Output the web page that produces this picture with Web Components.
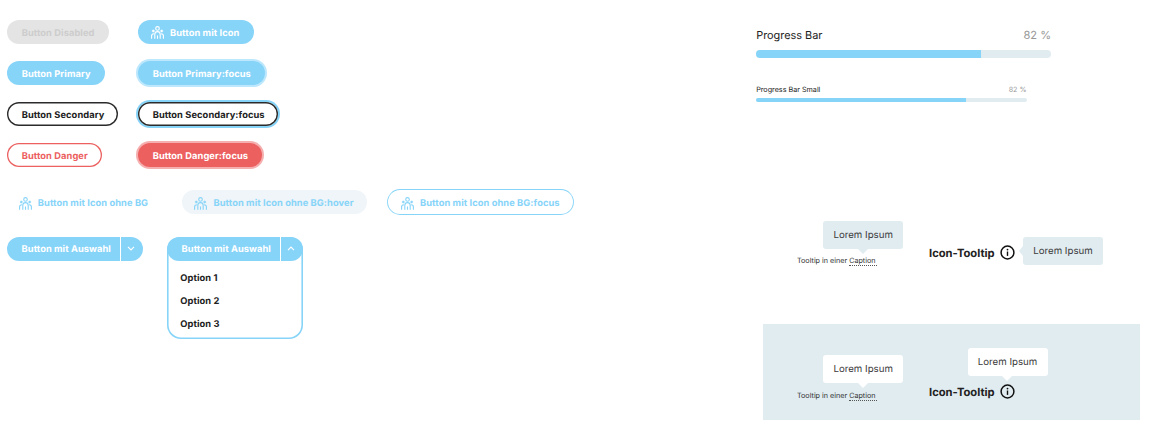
<!DOCTYPE html>
<html lang="de">
<head>
<meta charset="utf-8">
<title>UI-Komponenten</title>
<style>
html,body{margin:0;background:#fff}
body{width:1154px;height:432px;overflow:hidden;font-family:Inter,"Liberation Sans",sans-serif;color:#222;text-rendering:geometricPrecision}
</style>
</head>
<body>
<component-sheet></component-sheet>
<script>
const define = (name, markup, setup) => {
  const tpl = document.createElement('template');
  tpl.innerHTML = markup;
  customElements.define(name, class extends HTMLElement {
    constructor(){ super(); this.attachShadow({mode:'open'}).append(tpl.content.cloneNode(true)); }
    connectedCallback(){ if (setup) setup(this, this.shadowRoot); }
  });
};

define('people-icon', `
<style>:host{display:block;width:13px;height:13px;flex:none}svg{display:block}</style>
<svg width="13" height="13" viewBox="0 0 13 13" fill="none" stroke="currentColor" stroke-width="1.1">
<circle cx="6.5" cy="2.4" r="1.8"/><circle cx="2.3" cy="5" r="1.1" fill="currentColor" stroke-width=".5"/><circle cx="10.7" cy="5" r="1.1" fill="currentColor" stroke-width=".5"/>
<path d="M3.8 12.8V8.5C3.8 6.7 4.9 5.6 6.5 5.6S9.2 6.7 9.2 8.5V12.8M.6 12.8V9.8C.6 8.5 1.3 7.7 2.9 7.7M12.4 12.8V9.8C12.4 8.5 11.7 7.7 10.1 7.7M6.5 12.8V9.4"/></svg>`);

define('info-icon', `
<style>:host{display:block;flex:none}svg{display:block}</style>
<svg width="15" height="15" viewBox="0 0 15 15"><circle cx="7.5" cy="7.5" r="6.4" fill="none" stroke="#111" stroke-width="1.5"/><circle cx="7.5" cy="4.6" r=".9" fill="#111"/><path d="M7.5 6.5V10.9" stroke="#111" stroke-width="1.4"/></svg>`);

define('ui-button', `
<style>
:host{display:flex;align-items:center;box-sizing:border-box;width:var(--w);height:24px;border-radius:12px;padding-left:14.4px;font-size:9.3px;font-weight:700;letter-spacing:.08px;line-height:22px;white-space:nowrap;background:#87d4f9;color:#fff}
:host([icon]){padding-left:12.6px}
span{padding-top:3.2px}
people-icon{display:none;margin-right:6.1px;margin-top:1.6px}
:host([icon]) people-icon{display:block}
:host([kind=disabled]){background:#e4e4e4;color:#cdcdcd}
:host([kind=secondary]){background:#fff;color:#222;box-shadow:inset 0 0 0 1.4px #2b2b2b}
:host([kind=danger]){background:#fff;color:#ec6060;box-shadow:inset 0 0 0 1.3px #ec6060}
:host([kind=ghost]){background:transparent;color:#87d4f9;padding-left:11.4px}
:host([kind=hover]){background:#eff5f8;color:#87d4f9}
:host([kind=outline]){background:#fff;color:#87d4f9;box-shadow:0 0 0 .9px #87d4f9}
:host([kind=primary][focused]){box-shadow:0 0 0 2px #bce7fc}
:host([kind=secondary][focused]){box-shadow:inset 0 0 0 1.4px #2b2b2b,0 0 0 2px #87d4f9}
:host([kind=danger][focused]){background:#ec6060;color:#fff;box-shadow:0 0 0 2px #f5afaf}
</style><people-icon></people-icon><span><slot></slot></span>`);

define('split-button', `
<style>
:host{display:block;box-sizing:border-box;width:136px}
.head{display:flex;height:24px;border-radius:12px;background:#87d4f9;color:#fff;font-size:9.3px;font-weight:700;letter-spacing:.06px;line-height:26.4px;white-space:nowrap}
.label{box-sizing:border-box;width:113px;padding-left:14.3px}
.toggle{flex:1;display:flex;align-items:center;justify-content:center;border-left:1px solid #fff;padding-right:2px}
.menu{display:none}
:host([open]) .toggle svg{transform:scaleY(-1)}
:host([open]) .box{box-sizing:border-box;height:102.5px;border-radius:14px;box-shadow:inset 0 0 0 1.6px #87d4f9}
:host([open]) .menu{display:flex;flex-direction:column;padding:6.4px 13px}
</style>
<div class="box"><div class="head"><div class="label"><slot></slot></div><div class="toggle"><svg width="8" height="5" viewBox="0 0 8 5" fill="none" stroke="#fff" stroke-width="1.1"><path d="M1 .9 4 3.9 7 .9"/></svg></div></div>
<div class="menu"><slot name="options"></slot></div></div>`);

define('menu-option', `
<style>:host{display:block;height:22.8px;line-height:23.6px;font-size:9.3px;font-weight:700;letter-spacing:.08px;color:#222}</style><slot></slot>`);

define('progress-bar', `
<style>
:host{display:block;width:295.5px;color:#222}
.row{display:flex;justify-content:space-between;font-size:10.9px;line-height:14px;padding-left:.6px}
.value{color:#999;font-size:11.1px}
.track{height:8.6px;margin-top:7.5px;border-radius:5px;background:#e1ecf1;overflow:hidden}
.fill{height:100%;background:#87d4f9}
:host([small]){width:271px}
:host([small]) .row,:host([small]) .value{font-size:7.2px;line-height:10px}
:host([small]) .track{height:4.6px;margin-top:2.5px}
</style>
<div class="row"><span><slot></slot></span><span class="value"></span></div><div class="track"><div class="fill"></div></div>`,
(el, root) => { root.querySelector('.value').textContent = el.getAttribute('value') + ' %'; root.querySelector('.fill').style.width = el.getAttribute('fill') + 'px'; });

define('tip-bubble', `
<style>
:host{position:absolute;display:block;width:80px;height:28px;border-radius:3px;background:var(--tip);font-size:9.7px;line-height:29.6px;text-align:center;color:#3b3b3b;font-weight:400;white-space:nowrap}
i{position:absolute;width:0;height:0;border:5.5px solid transparent}
:host([side=top]) i{left:50%;top:100%;margin-left:-5.5px;border-top-color:var(--tip);border-bottom:0}
:host([side=right]) i{right:100%;top:8.5px;border-right-color:var(--tip);border-left:0;border-right-width:4.5px}
</style><slot></slot><i></i>`);

define('caption-tooltip', `
<style>
:host{display:block;position:relative;height:10px;font-size:7.2px;line-height:10px;color:#333;white-space:nowrap}
u{text-decoration:none;display:inline-block;height:9px;line-height:10px;border-bottom:1px dotted #555;vertical-align:top;padding-right:1px}
tip-bubble{left:26.2px;top:-35.1px}
</style>Tooltip in einer <u>Caption</u><tip-bubble side="top">Lorem Ipsum</tip-bubble>`);

define('icon-tooltip', `
<style>
:host{display:flex;position:relative;align-items:center;height:16px;gap:5.5px;font-size:11.2px;line-height:16px;font-weight:700;color:#222;white-space:nowrap}
tip-bubble{left:94px;top:-8px}
:host([above]) tip-bubble{left:38.6px;top:-36.2px}
info-icon{margin-top:-1px}
</style><span>Icon-Tooltip</span><info-icon></info-icon><tip-bubble>Lorem Ipsum</tip-bubble>`,
(el, root) => root.querySelector('tip-bubble').setAttribute('side', el.hasAttribute('above') ? 'top' : 'right'));

define('component-sheet', `
<style>
:host{display:grid;grid-template-columns:748px 1fr;height:432px}
.left{padding:20px 0 0 7.3px}
.pairs{display:grid;grid-template-columns:131px max-content;grid-auto-rows:24px;row-gap:17.1px}
.ghosts{display:flex;margin-top:23px;height:24px}
.splits{display:flex;gap:24px;margin-top:22.6px;align-items:flex-start}
.right{display:flex;flex-direction:column;padding:28px 0 0 7.6px}
.small{margin-top:27px}
.tips{display:grid;grid-template-columns:132px 1fr;padding-left:41.4px;height:16px;align-items:start;margin-top:143px;--tip:#e1ecf1}
.tips caption-tooltip{margin-top:10.8px}
.panel{box-sizing:border-box;width:376.5px;height:96px;background:#e1ecf1;margin:63px 0 0 7.8px;padding:59.8px 0 0 33.6px}
.panel .tips{margin:0;padding:0;--tip:#fff}
.panel caption-tooltip{margin-top:6.6px}
</style>
<div class="left">
 <div class="pairs">
  <ui-button kind="disabled" style="--w:102px">Button Disabled</ui-button><ui-button kind="primary" icon style="--w:116px">Button mit Icon</ui-button>
  <ui-button kind="primary" style="--w:98px">Button Primary</ui-button><ui-button kind="primary" focused style="--w:126.5px">Button Primary:focus</ui-button>
  <ui-button kind="secondary" style="--w:111px">Button Secondary</ui-button><ui-button kind="secondary" focused style="--w:140px">Button Secondary:focus</ui-button>
  <ui-button kind="danger" style="--w:95px">Button Danger</ui-button><ui-button kind="danger" focused style="--w:124px">Button Danger:focus</ui-button>
 </div>
 <div class="ghosts">
  <ui-button kind="ghost" icon style="--w:174.5px">Button mit Icon ohne BG</ui-button>
  <ui-button kind="hover" icon style="--w:185.5px;margin-right:21px">Button mit Icon ohne BG:hover</ui-button>
  <ui-button kind="outline" icon style="--w:185px">Button mit Icon ohne BG:focus</ui-button>
 </div>
 <div class="splits">
  <split-button>Button mit Auswahl</split-button>
  <split-button open>Button mit Auswahl<menu-option slot="options">Option 1</menu-option><menu-option slot="options">Option 2</menu-option><menu-option slot="options">Option 3</menu-option></split-button>
 </div>
</div>
<div class="right">
 <progress-bar value="82" fill="225">Progress Bar</progress-bar>
 <progress-bar class="small" small value="82" fill="210.5">Progress Bar Small</progress-bar>
 <div class="tips"><caption-tooltip></caption-tooltip><icon-tooltip></icon-tooltip></div>
 <div class="panel"><div class="tips"><caption-tooltip></caption-tooltip><icon-tooltip above></icon-tooltip></div></div>
</div>`);
</script>
</body>
</html>
